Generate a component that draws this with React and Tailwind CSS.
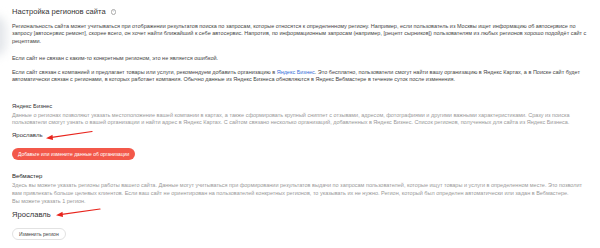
export default function App() {
  const f = { fontFamily: '"Liberation Sans", Arial, sans-serif' };
  return (
    <div className="relative w-[600px] h-[248px] bg-white overflow-hidden text-[#444]" style={f}>
      <div className="absolute -left-[16px] top-[16px] w-[22px] h-[40px] rounded-full bg-gray-300/60 blur-[5px]" />
      <div className="relative pl-[12px] pr-[10px] pt-[6px]">
        <div className="flex items-center gap-[5px] text-[7.6px] leading-[12px] text-[#333]">
          <span>Настройка регионов сайта</span>
          <span className="inline-flex items-center justify-center w-[5.5px] h-[5.5px] rounded-full border-[0.6px] border-[#aaa] text-[3.5px] leading-none text-[#999]">i</span>
        </div>
        <p className="mt-[4.5px] text-[5.5px] leading-[7.5px] text-[#444]">
          Региональность сайта может учитываться при отображении результатов поиска по запросам, которые относятся к определенному региону. Например, если пользователь из Москвы ищет информацию об автосервисе по запросу [автосервис ремонт], скорее всего, он хочет найти ближайший к себе автосервис. Напротив, по информационным запросам (например, [рецепт сырников]) пользователям из любых регионов хорошо подойдёт сайт с рецептами.
        </p>
        <p className="mt-[9.5px] text-[5.5px] leading-[7.5px]">
          Если сайт не связан с каким-то конкретным регионом, это не является ошибкой.
        </p>
        <p className="mt-[6.5px] text-[5.5px] leading-[7.5px]">
          Если сайт связан с компанией и предлагает товары или услуги, рекомендуем добавить организацию в{" "}
          <span className="text-[#3a6fd8]">Яндекс Бизнес</span>. Это бесплатно, пользователи смогут найти вашу организацию в Яндекс Картах, а в Поиске сайт будет автоматически связан с регионами, в которых работает компания. Обычно данные из Яндекс Бизнеса обновляются в Яндекс Вебмастере в течение суток после изменения.
        </p>
        <div className="mt-[19px] text-[5.8px] leading-[7.5px] text-[#333]">Яндекс Бизнес</div>
        <p className="mt-[1.5px] text-[5.5px] leading-[7.5px] text-[#999]">
          Данные о регионах позволяют указать местоположение вашей компании в картах, а также сформировать крупный сниппет с отзывами, адресом, фотографиями и другими важными характеристиками. Сразу из поиска пользователи смогут узнать о вашей организации и найти адрес в Яндекс Картах. С сайтом связано несколько организаций, добавленных в Яндекс Бизнес. Список регионов, полученных для сайта из Яндекс Бизнеса.
        </p>
        <div className="mt-[4.75px] text-[6px] leading-[8px] text-[#333]">Ярославль</div>
        <div className="mt-[9px] flex">
          <button className="h-[12px] px-[6px] rounded-full bg-[#f3584a] text-white text-[5px] leading-none">
            Добавьте или измените данные об организации
          </button>
        </div>
        <div className="mt-[12.25px] text-[6px] leading-[7.5px] text-[#222]">Вебмастер</div>
        <p className="mt-[1.25px] text-[5.5px] leading-[8px] text-[#999]">
          Здесь вы можете указать регионы работы вашего сайта. Данные могут учитываться при формировании результатов выдачи по запросам пользователей, которые ищут товары и услуги в определенном месте. Это позволит вам привлекать больше целевых клиентов. Если ваш сайт не ориентирован на пользователей конкретных регионов, то указывать их не нужно. Регион, который был определен автоматически или задан в Вебмастере.
          <br />
          Вы можете указать 1 регион.
        </p>
        <div className="mt-[5px] text-[7.6px] leading-[10px] text-[#333]">Ярославль</div>
        <div className="mt-[8px] flex">
          <button className="h-[12px] px-[6px] rounded-full border border-[#e2e2e2] bg-white text-[#444] text-[5px] leading-none">
            Изменить регион
          </button>
        </div>
      </div>
      <svg className="absolute left-0 top-0 pointer-events-none" width="600" height="248">
        <g stroke="#e8241c" strokeWidth="1.2" fill="#e8241c" strokeLinecap="round">
          <line x1="92" y1="131.5" x2="50" y2="137.6" />
          <polygon points="46,138.2 52.5,134.8 53,140" stroke="none" />
          <line x1="100" y1="209" x2="60" y2="214.6" />
          <polygon points="56,215.2 62.5,211.8 63,217" stroke="none" />
        </g>
      </svg>
    </div>
  );
}
